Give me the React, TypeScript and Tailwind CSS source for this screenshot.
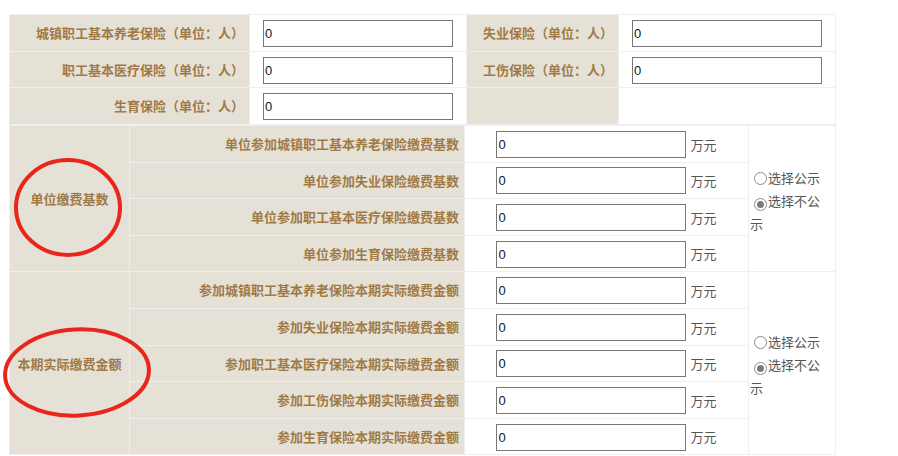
const label = "text-right pr-[5px] text-[13px] font-bold text-[#a07a45] bg-[#e6e1d7] border border-[#efefef]";
const head = "text-center text-[13px] font-bold text-[#a07a45] bg-[#e6e1d7] border border-[#efefef]";
const cell = "bg-white border border-[#efefef]";

function Field() {
  return (
    <input
      readOnly
      value="0"
      className="w-[190px] h-[27px] border border-[#767676] bg-white pl-[1px] text-[13px] text-[#0a1a2a] align-middle outline-none"
      style={{ fontFamily: '"Liberation Sans", Arial, sans-serif' }}
    />
  );
}

function Radio({ checked }: { checked?: boolean }) {
  return (
    <span className="inline-flex items-center justify-center w-[13px] h-[13px] ml-[4px] mr-[1px] rounded-full border border-[#8a8a8a] bg-white align-[-2px]">
      {checked && <span className="w-[7px] h-[7px] rounded-full bg-[#7a7a7a]" />}
    </span>
  );
}

function Publish({ rows }: { rows: number }) {
  return (
    <td rowSpan={rows} className={`${cell} align-middle`}>
      <div className="w-[78px] pl-[1px] pt-[3px] text-[13px] leading-[23px] text-[#555]">
        <Radio />选择公示<br />
        <Radio checked />选择不公示
      </div>
    </td>
  );
}

function MoneyRow({ text, first, title, rows }: { text: string; first?: boolean; title?: string; rows?: number }) {
  return (
    <tr className="h-[36.6px]">
      {first && <td rowSpan={rows} className={head}>{title}</td>}
      <td className={label}>{text}</td>
      <td className={`${cell} text-center`}>
        <Field />
        <span className="ml-[4px] text-[13px] text-[#555] align-middle">万元</span>
      </td>
      {first && <Publish rows={rows!} />}
    </tr>
  );
}

export default function App() {
  const base = [
    "单位参加城镇职工基本养老保险缴费基数",
    "单位参加失业保险缴费基数",
    "单位参加职工基本医疗保险缴费基数",
    "单位参加生育保险缴费基数",
  ];
  const paid = [
    "参加城镇职工基本养老保险本期实际缴费金额",
    "参加失业保险本期实际缴费金额",
    "参加职工基本医疗保险本期实际缴费金额",
    "参加工伤保险本期实际缴费金额",
    "参加生育保险本期实际缴费金额",
  ];

  return (
    <div
      className="relative w-[898px] h-[456px] bg-white pt-[14px] pl-[9px] overflow-hidden"
      style={{ fontFamily: '"Noto Sans CJK SC", "Noto Sans", sans-serif' }}
    >
      <table className="table-fixed border-collapse w-[826px]">
        <colgroup>
          <col className="w-[240px]" />
          <col className="w-[217px]" />
          <col className="w-[152px]" />
          <col className="w-[217px]" />
        </colgroup>
        <tbody>
          <tr className="h-[37px]">
            <td className={label}>城镇职工基本养老保险（单位：人）</td>
            <td className={`${cell} pl-[13px]`}><Field /></td>
            <td className={label}>失业保险（单位：人）</td>
            <td className={`${cell} pl-[13px]`}><Field /></td>
          </tr>
          <tr className="h-[36px]">
            <td className={label}>职工基本医疗保险（单位：人）</td>
            <td className={`${cell} pl-[13px]`}><Field /></td>
            <td className={label}>工伤保险（单位：人）</td>
            <td className={`${cell} pl-[13px]`}><Field /></td>
          </tr>
          <tr className="h-[37px]">
            <td className={label}>生育保险（单位：人）</td>
            <td className={`${cell} pl-[13px]`}><Field /></td>
            <td className={label}></td>
            <td className={cell}></td>
          </tr>
        </tbody>
      </table>

      <table className="table-fixed border-collapse w-[826px]">
        <colgroup>
          <col className="w-[120px]" />
          <col className="w-[335px]" />
          <col className="w-[284px]" />
          <col className="w-[87px]" />
        </colgroup>
        <tbody>
          {base.map((t, i) => (
            <MoneyRow key={t} text={t} first={i === 0} title="单位缴费基数" rows={base.length} />
          ))}
          {paid.map((t, i) => (
            <MoneyRow key={t} text={t} first={i === 0} title="本期实际缴费金额" rows={paid.length} />
          ))}
        </tbody>
      </table>

      <svg className="absolute left-0 top-0 pointer-events-none" width="898" height="456">
        <ellipse cx="68" cy="207.5" rx="52" ry="47.5" fill="none" stroke="#e8261c" strokeWidth="4" />
        <ellipse cx="77" cy="372.5" rx="72" ry="43" fill="none" stroke="#e8261c" strokeWidth="4" transform="rotate(-3 77 372.5)" />
      </svg>
    </div>
  );
}
